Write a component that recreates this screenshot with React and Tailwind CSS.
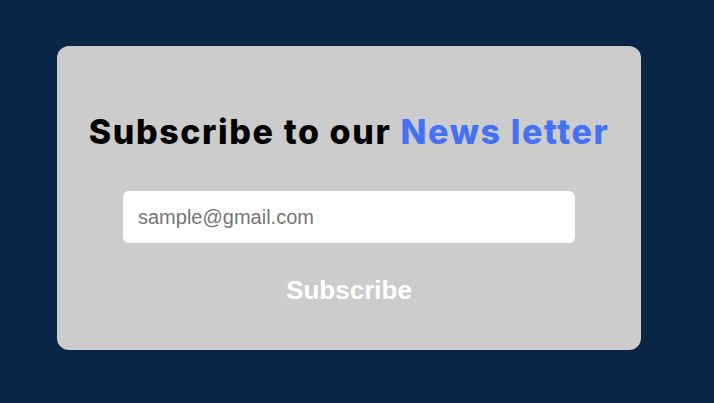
import React from "react";

function App() {
  return (
    <div className="min-h-[403px] w-full bg-[#0a2647] pt-[46px] pl-[57px]">
      <div className="w-[584px] h-[304px] bg-[#cccccc] rounded-[12px] flex flex-col items-center pt-[62px]">
        <h1 className="font-['Inter',sans-serif] font-extrabold text-[34px] leading-[48px] text-black tracking-[1.6px]">
          Subscribe to our <span className="text-[#4472f2]">News letter</span>
        </h1>
        <input
          type="text"
          placeholder="sample@gmail.com"
          className="mt-[35px] w-[452px] h-[52px] bg-white rounded-[6px] px-[15px] font-['Liberation_Sans',Arial,sans-serif] text-[20px] text-[#333] placeholder:text-[#757575] outline-none"
        />
        <button className="mt-[32px] font-['Liberation_Sans',Arial,sans-serif] font-bold text-[26px] leading-[30px] text-white">
          Subscribe
        </button>
      </div>
    </div>
  );
}

export default App;
